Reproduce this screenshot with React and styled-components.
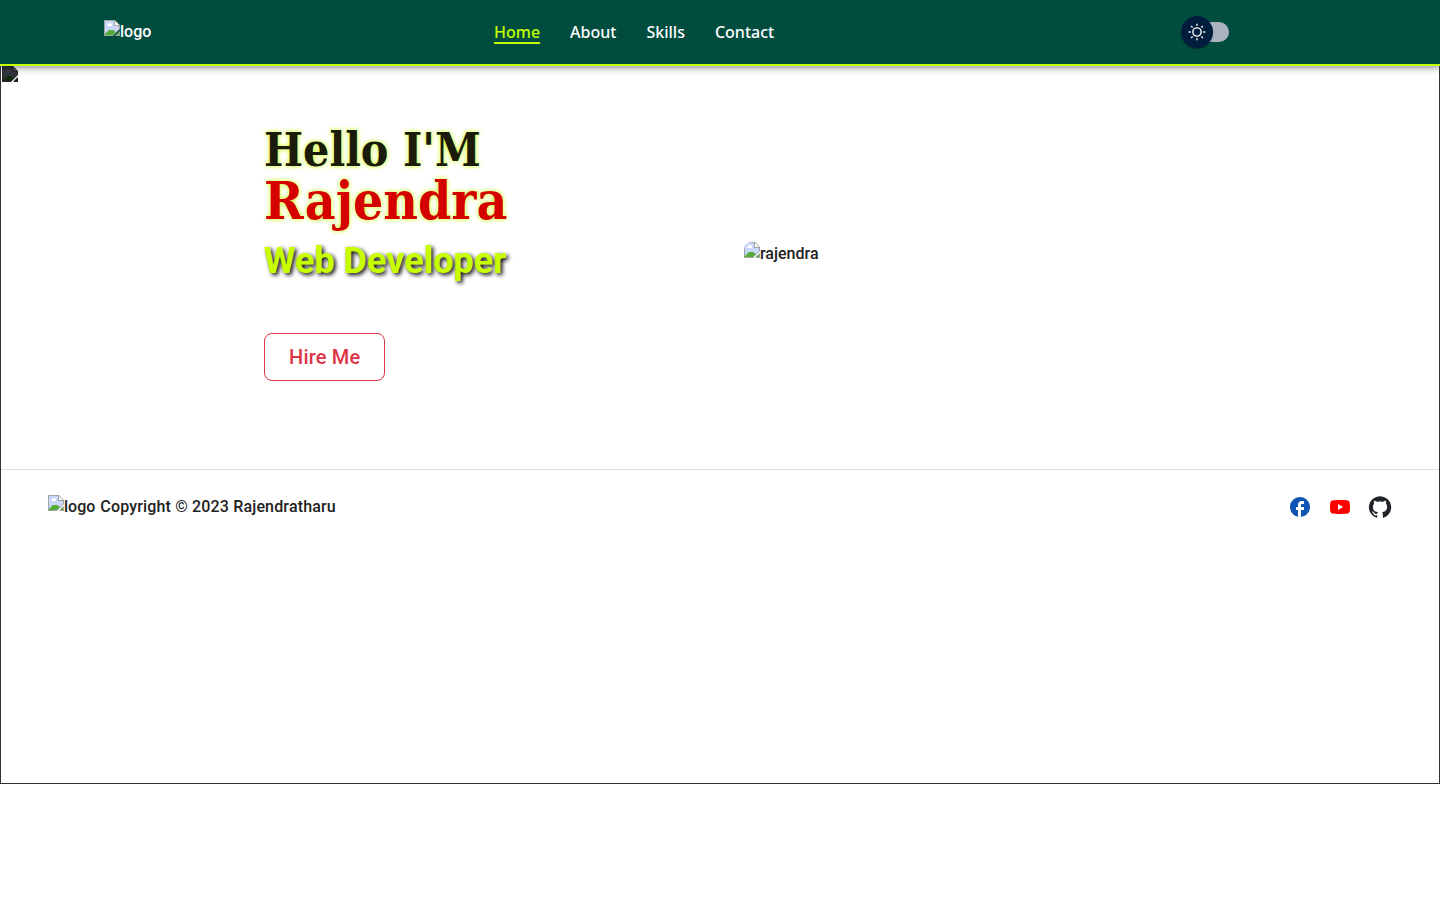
import React, { useState } from "react";
import styled, { createGlobalStyle } from "styled-components";

const GlobalStyle = createGlobalStyle`
  *, *::before, *::after { box-sizing: border-box; }
  body {
    margin: 0;
    background: #fff;
    color: #212121;
    font: 500 16px/24px Roboto, "Liberation Sans", sans-serif;
  }
  h1, h2, p { margin: 0; }
`;

const Header = styled.header`
  position: sticky;
  top: 0;
  z-index: 2;
  margin-bottom: -2px;
  background: #004d40;
  border-bottom: 2px solid #c6ff00;
  box-shadow: 0 2px 4px -1px rgba(0, 0, 0, 0.2), 0 4px 5px rgba(0, 0, 0, 0.14),
    0 1px 10px rgba(0, 0, 0, 0.12);
`;

const Toolbar = styled.div`
  display: grid;
  grid-template-columns: 375fr 702fr 155fr;
  align-items: center;
  max-width: 1280px;
  min-height: 64px;
  margin: 0 auto;
  padding: 0 24px;
`;

const LogoLink = styled.a`
  display: inline-flex;
  color: #fff;
  text-decoration: none;
`;

const Nav = styled.nav`
  display: flex;
`;

const NavLink = styled.a`
  padding: 0 15px;
  color: ${({ $active }) => ($active ? "#c6ff00" : "#fff")};
  font-family: "Noto Sans", sans-serif;
  text-decoration: ${({ $active }) => ($active ? "underline 2px" : "none")};
  text-underline-offset: 4px;
  text-decoration-skip-ink: none;
`;

const Switch = styled.label`
  position: relative;
  display: flex;
  align-items: center;
  width: 48px;
  height: 20px;
  border-radius: 10px;
  background: #aab4be;
  cursor: pointer;
`;

const SwitchInput = styled.input`
  position: absolute;
  inset: 0;
  width: 100%;
  height: 100%;
  margin: 0;
  opacity: 0;
  cursor: pointer;
`;

const Thumb = styled.span`
  display: flex;
  flex: none;
  align-items: center;
  justify-content: center;
  width: 32px;
  height: 32px;
  margin-left: ${({ $on }) => ($on ? "16px" : "0")};
  border-radius: 50%;
  background: #001e3c;
  box-shadow: 0 2px 1px -1px rgba(0, 0, 0, 0.2), 0 1px 1px rgba(0, 0, 0, 0.14),
    0 1px 3px rgba(0, 0, 0, 0.12);
`;

const Page = styled.div`
  position: relative;
  min-height: 80vh;
  border: 1px solid #333;
`;

const Backdrop = styled.div`
  position: absolute;
  top: 1px;
  left: 1px;
  display: flex;
  filter: brightness(0.25);
`;

const Hero = styled.main`
  display: grid;
  grid-template-columns: 1fr 1fr;
  align-items: center;
  max-width: 960px;
  margin: 0 auto;
  padding: 60px 0 88px;
`;

const Column = styled.div`
  padding: 0 24px;
`;

const Greeting = styled.h1`
  color: #1b1b0b;
  font: 700 46px/50px "DejaVu Serif Condensed", "DejaVu Serif", serif;
  text-shadow: 0 0 5px #c6ff00;
`;

const Name = styled.span`
  display: block;
  color: #d50000;
  font-size: 53px;
`;

const Role = styled.h2`
  margin: 14px 0 50px;
  color: #c6ff00;
  font-size: 36px;
  font-weight: 700;
  line-height: 44px;
  text-shadow: 2px 2px 4px #000;
`;

const HireButton = styled.button`
  display: block;
  height: 48px;
  padding: 0 24px;
  border: 1px solid #dc3545;
  border-radius: 8px;
  background: transparent;
  color: #dc3545;
  font: 500 20px/30px Roboto, sans-serif;
  letter-spacing: 0.01em;
  cursor: pointer;
`;

const Footer = styled.footer`
  display: flex;
  align-items: center;
  justify-content: space-between;
  padding: 25px 47px;
  border-top: 1px solid #dedede;
`;

const Copyright = styled.div`
  display: flex;
  gap: 5px;
`;

const Spaced = styled.p`
  letter-spacing: 0.01em;
`;

const Socials = styled.div`
  display: flex;
  gap: 16px;
`;

const SocialLink = styled.a`
  display: flex;
  color: ${({ $color }) => $color};
`;

const Missing = styled.span`
  display: inline-flex;
  align-items: flex-start;
  line-height: 24px;

  svg { flex: none; border-top-left-radius: ${({ $rounded }) => ($rounded ? "8px" : "0")}; }
`;

function ImageGlyph() {
  return (
    <svg width="16" height="16" viewBox="0 0 16 16" aria-hidden="true">
      <path d="M0 0h11l5 5v4l-7 7H0z" fill="#a3a3a3" />
      <path d="M1 1h9v5h5v3l-6 6H1z" fill="#c9d8fa" />
      <path d="M3 6V5h1V4h1V3h2v1h1v2z" fill="#fff" />
      <path d="M1 15v-1l4-4h4l3 2-3 3z" fill="#55ad37" />
      <path d="M11 1l4 4h-4z" fill="#fff" />
      <path d="M16 11v5h-5z" fill="#a3a3a3" />
      <path d="M15 12v3h-3z" fill="#55ad37" />
    </svg>
  );
}

function MissingImage({ label, rounded }) {
  return (
    <Missing $rounded={rounded}>
      <ImageGlyph />
      {label}
    </Missing>
  );
}

function SunIcon() {
  return (
    <svg width="20" height="20" viewBox="0 0 20 20" fill="#fff" aria-hidden="true">
      <path d="M9.305 1.667V3.75h1.389V1.667h-1.39zm-4.707 1.95l-.982.982L5.09 6.072l.982-.982-1.473-1.473zm10.802 0L13.927 5.09l.982.982 1.473-1.473-.982-.982zM10 5.139a4.872 4.872 0 00-4.862 4.86A4.872 4.872 0 0010 14.862 4.872 4.872 0 0014.86 10 4.872 4.872 0 0010 5.139zm0 1.389A3.462 3.462 0 0113.471 10a3.462 3.462 0 01-3.473 3.472A3.462 3.462 0 016.527 10 3.462 3.462 0 0110 6.528zM1.665 9.305v1.39h2.083v-1.39H1.666zm14.583 0v1.39h2.084v-1.39h-2.084zM5.09 13.928L3.616 15.4l.982.982 1.473-1.473-.982-.982zm9.82 0l-.982.982 1.473 1.473.982-.982-1.473-1.473zM9.305 16.25v2.083h1.389V16.25h-1.39z" />
    </svg>
  );
}

const links = ["Home", "About", "Skills", "Contact"];

const socials = [
  {
    name: "Facebook",
    color: "#1155b4",
    path: "M22 12c0-5.52-4.48-10-10-10S2 6.48 2 12c0 4.84 3.44 8.87 8 9.8V15H8v-3h2V9.5C10 7.57 11.57 6 13.5 6H16v3h-2c-.55 0-1 .45-1 1v2h3v3h-3v6.95c5.05-.5 9-4.76 9-9.95z",
  },
  {
    name: "YouTube",
    color: "#ff0000",
    path: "M10 15l5.19-3L10 9v6m11.56-7.83c.13.47.22 1.1.28 1.9.07.8.1 1.49.1 2.09L22 12c0 2.19-.16 3.8-.44 4.83-.25.9-.83 1.48-1.73 1.73-.47.13-1.33.22-2.65.28-1.3.07-2.49.1-3.59.1L12 19c-4.19 0-6.8-.16-7.83-.44-.9-.25-1.48-.83-1.73-1.73-.13-.47-.22-1.1-.28-1.9-.07-.8-.1-1.49-.1-2.09L2 12c0-2.19.16-3.8.44-4.83.25-.9.83-1.48 1.73-1.73.47-.13 1.33-.22 2.65-.28 1.3-.07 2.49-.1 3.59-.1L12 5c4.19 0 6.8.16 7.83.44.9.25 1.48.83 1.73 1.73z",
  },
  {
    name: "GitHub",
    color: "#212529",
    path: "M12 1.27a11 11 0 00-3.48 21.46c.55.09.73-.28.73-.55v-1.84c-3.03.64-3.67-1.46-3.67-1.46-.55-1.29-1.28-1.65-1.28-1.65-.92-.65.1-.65.1-.65 1.1 0 1.73 1.1 1.73 1.1.92 1.65 2.57 1.2 3.21.92a2 2 0 01.64-1.47c-2.47-.27-5.04-1.19-5.04-5.5 0-1.1.46-2.1 1.2-2.84a3.76 3.76 0 010-2.93s.91-.28 3.11 1.1c1.8-.49 3.7-.49 5.5 0 2.1-1.38 3.02-1.1 3.02-1.1a3.76 3.76 0 01.1 2.93c.83.74 1.2 1.74 1.2 2.94 0 4.21-2.57 5.13-5.04 5.4.45.37.82.92.82 2.02v3.03c0 .27.1.64.73.55A11 11 0 0012 1.27",
  },
];

export default function App() {
  const [dark, setDark] = useState(false);

  return (
    <>
      <GlobalStyle />
      <Header>
        <Toolbar>
          <LogoLink href="#home">
            <MissingImage label="logo" />
          </LogoLink>
          <Nav>
            {links.map((link, i) => (
              <NavLink key={link} href={`#${link.toLowerCase()}`} $active={i === 0}>
                {link}
              </NavLink>
            ))}
          </Nav>
          <Switch>
            <Thumb $on={dark}>
              <SunIcon />
            </Thumb>
            <SwitchInput
              type="checkbox"
              aria-label="Dark mode"
              checked={dark}
              onChange={(e) => setDark(e.target.checked)}
            />
          </Switch>
        </Toolbar>
      </Header>
      <Page>
        <Backdrop>
          <ImageGlyph />
        </Backdrop>
        <Hero>
          <Column>
            <Greeting>
              Hello I'M
              <Name>Rajendra</Name>
            </Greeting>
            <Role>Web Developer</Role>
            <HireButton type="button">Hire Me</HireButton>
          </Column>
          <Column>
            <MissingImage label="rajendra" rounded />
          </Column>
        </Hero>
        <Footer>
          <Copyright>
            <MissingImage label="logo" />
            <Spaced>Copyright © 2023 Rajendratharu</Spaced>
          </Copyright>
          <Socials>
            {socials.map(({ name, color, path }) => (
              <SocialLink key={name} href={`#${name.toLowerCase()}`} aria-label={name} $color={color}>
                <svg width="24" height="24" viewBox="0 0 24 24" fill="currentColor" aria-hidden="true">
                  <path d={path} />
                </svg>
              </SocialLink>
            ))}
          </Socials>
        </Footer>
      </Page>
    </>
  );
}
